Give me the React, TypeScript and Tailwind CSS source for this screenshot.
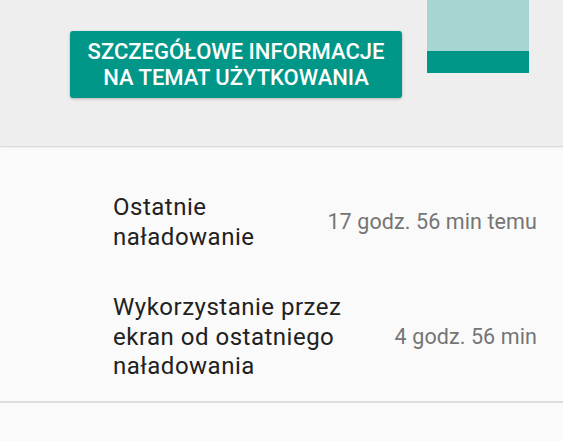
import React from "react";

const rows = [
  { label: ["Ostatnie", "naładowanie"], value: "17 godz. 56 min temu" },
  { label: ["Wykorzystanie przez", "ekran od ostatniego", "naładowania"], value: "4 godz. 56 min" },
];

function UsageButton() {
  return (
    <button className="mt-[31px] flex h-[67px] w-[332px] flex-col items-center justify-center rounded-[3px] bg-[#009688] text-[22px] font-medium leading-[26px] text-white shadow-[0_1px_3px_rgba(0,0,0,0.25)]">
      <span>SZCZEGÓŁOWE INFORMACJE</span>
      <span>NA TEMAT UŻYTKOWANIA</span>
    </button>
  );
}

function BatteryBar() {
  return (
    <div className="ml-[25px] flex w-[102px] flex-col">
      <div className="h-[51px] bg-[#a7d5d1]" />
      <div className="h-[22px] bg-[#009688]" />
    </div>
  );
}

export default function App() {
  return (
    <div
      className="h-[441px] w-[563px] overflow-hidden bg-[#fafafa]"
      style={{ fontFamily: "Roboto, 'Noto Sans', sans-serif" }}
    >
      <div className="flex h-[147px] items-start border-b border-[#dadada] bg-[#eeeeee] pl-[70px] shadow-[0_1px_2px_rgba(0,0,0,0.06)]">
        <UsageButton />
        <BatteryBar />
      </div>

      <div className="flex h-[256px] flex-col gap-[41px] border-b-2 border-[#dddddd] pl-[113px] pr-[26px] pt-[46px]">
        {rows.map((row) => (
          <div key={row.value} className="flex items-center justify-between">
            <div className="flex flex-col text-[24px] leading-[29.5px] tracking-[0.5px] text-[#212121]">
              {row.label.map((line) => (
                <span key={line}>{line}</span>
              ))}
            </div>
            <span className="text-[21.5px] tracking-[0.1px] text-[#757575]">{row.value}</span>
          </div>
        ))}
      </div>
    </div>
  );
}
